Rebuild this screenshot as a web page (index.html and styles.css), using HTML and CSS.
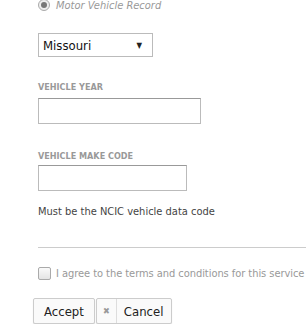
FILE: index.html
```html
<!DOCTYPE html>
<html lang="en">
<head>
  <meta charset="UTF-8">
  <title>Vehicle Record</title>
  <link rel="stylesheet" href="styles.css">
</head>
<body>
  <form class="record-form">
    <label class="radio-row">
      <span class="radio"><span class="radio-dot"></span></span>
      <span class="radio-text">Motor Vehicle Record</span>
    </label>

    <div class="select-box">
      <span>Missouri</span>
      <span class="caret">&#9660;</span>
    </div>

    <div class="field">
      <div class="field-label">VEHICLE YEAR</div>
      <input type="text" class="text-input year">
    </div>

    <div class="field">
      <div class="field-label">VEHICLE MAKE CODE</div>
      <input type="text" class="text-input make">
      <div class="help">Must be the NCIC vehicle data code</div>
    </div>

    <div class="divider"></div>

    <label class="agree">
      <span class="checkbox"></span>
      <span class="agree-text">I agree to the terms and conditions for this service</span>
    </label>

    <div class="actions">
      <button type="button" class="btn">Accept</button>
      <button type="button" class="btn cancel"><span class="x">&#10006;</span><span class="label">Cancel</span></button>
    </div>
  </form>
</body>
</html>
```

FILE: styles.css
```css
body {
  margin: 0;
  font-family: 'DejaVu Sans Condensed', 'DejaVu Sans', sans-serif;
  font-size: 11px;
  color: #333;
  background: #fff;
  overflow: hidden;
}
.record-form {
  padding-left: 38px;
  margin-top: -1px;
}
.radio-row {
  display: flex;
  align-items: center;
  gap: 6px;
  height: 12px;
}
.radio {
  width: 10px;
  height: 10px;
  border: 1px solid #aaa;
  border-radius: 50%;
  background: #eee;
  display: flex;
  align-items: center;
  justify-content: center;
}
.radio-dot {
  width: 6px;
  height: 6px;
  border-radius: 50%;
  background: #777;
}
.radio-text {
  color: #999;
  font-style: italic;
  font-size: 11px;
}
.select-box {
  margin-top: 22px;
  width: 99px;
  height: 22px;
  border: 1px solid #bbb;
  display: flex;
  align-items: center;
  justify-content: space-between;
  padding: 0 10px 0 4px;
  font-size: 13px;
  color: #111;
}
.caret {
  font-size: 8px;
  color: #222;
}
.field {
  margin-top: 24px;
}
.field + .field {
  margin-top: 26px;
}
.field-label {
  font-weight: bold;
  font-size: 9px;
  color: #999;
  line-height: 12px;
  margin-bottom: 5px;
}
.field + .field .field-label {
  margin-bottom: 3px;
}
.text-input {
  display: block;
  box-sizing: border-box;
  height: 26px;
  border: 1px solid #bbb;
  border-top-color: #999;
  margin: 0;
  padding: 0 4px;
}
.year {
  width: 163px;
}
.make {
  width: 149px;
}
.help {
  margin-top: 14px;
  color: #444;
  font-size: 11px;
}
.divider {
  margin-top: 29px;
  border-top: 1px solid #ccc;
}
.agree {
  display: flex;
  align-items: center;
  gap: 5px;
  margin-top: 19px;
  color: #999;
  font-size: 11px;
  white-space: nowrap;
}
.agree-text {
  letter-spacing: -0.05px;
}
.checkbox {
  width: 11px;
  height: 11px;
  border: 1px solid #aaa;
  border-radius: 2px;
  background: linear-gradient(#fafafa, #e4e4e4);
  flex: none;
}
.actions {
  display: flex;
  gap: 1px;
  margin-top: 18px;
  margin-left: -5px;
}
.btn {
  font-family: inherit;
  font-size: 13px;
  color: #222;
  height: 26px;
  padding: 0 10px;
  border: 1px solid #ccc;
  border-radius: 2px;
  background: #fafafa;
  box-shadow: 0 1px 1px rgba(0, 0, 0, 0.12);
}
.cancel {
  display: flex;
  align-items: stretch;
  padding: 0 8px 0 0;
}
.cancel .x {
  width: 19px;
  border-right: 1px solid #ddd;
  color: #999;
  font-size: 9px;
  display: flex;
  align-items: center;
  justify-content: center;
}
.cancel .label {
  display: flex;
  align-items: center;
  padding-left: 7px;
}
```
